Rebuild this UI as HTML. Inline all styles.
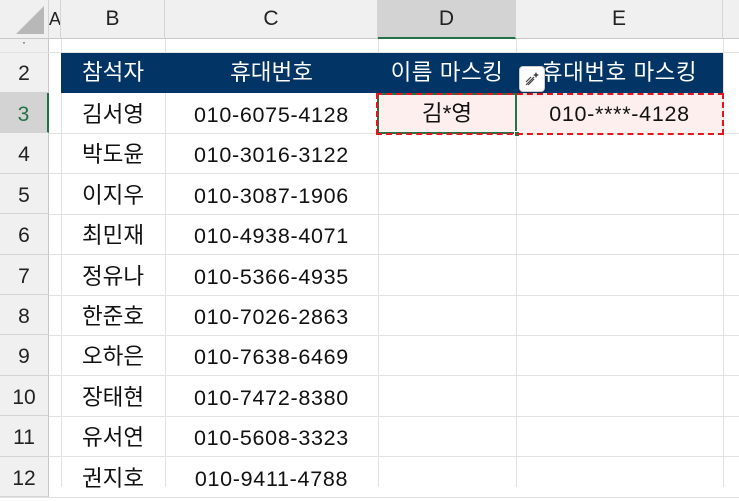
<!DOCTYPE html>
<html><head><meta charset="utf-8"><style>
*{margin:0;padding:0;box-sizing:border-box}
body{width:739px;height:487px;overflow:hidden;background:#fff;font-family:"Liberation Sans","Noto Sans CJK KR",sans-serif;position:relative}
.a{position:absolute}
.vl{position:absolute;top:0;width:1px;background:#e1e1e1;height:487px}
.hl{position:absolute;left:0;height:1px;background:#e1e1e1;width:739px}
.rh{position:absolute;left:0;width:49px;background:#f0f0f0;border-bottom:1px solid #d4d4d4;border-right:1px solid #c8c8c8;text-align:center;font-size:21px;color:#222}
.ch{position:absolute;top:0;height:39px;background:#f0f0f0;border-right:1px solid #d4d4d4;border-bottom:1px solid #c8c8c8;text-align:center;line-height:38px;font-size:21px;color:#222}
.c{position:absolute;text-align:center;font-size:22.5px;color:#111;white-space:nowrap}
.p{font-size:21.5px;letter-spacing:0.7px}
</style></head><body>
<div class="vl" style="left:61px"></div>
<div class="vl" style="left:165px"></div>
<div class="vl" style="left:378px"></div>
<div class="vl" style="left:516px"></div>
<div class="vl" style="left:723px"></div>
<div id="rows"></div>
<div class="ch" style="left:0;width:49px"><div class="a" style="left:16px;top:6px;width:0;height:0;border-left:28px solid transparent;border-bottom:28px solid #b8b8b8"></div></div>
<div class="ch" style="left:49px;width:12px;font-size:18px;overflow:hidden">A</div>
<div class="ch" style="left:61px;width:104px">B</div>
<div class="ch" style="left:165px;width:213px">C</div>
<div class="ch" style="left:378px;width:138px;background:#d3d3d3;border-bottom:2px solid #217346">D</div>
<div class="ch" style="left:516px;width:207px">E</div>
<div class="ch" style="left:723px;width:16px;border-right:none"></div>
<div class="a" style="left:61px;top:53px;width:662px;height:40px;background:#023466"></div>
<div class="c" style="left:61px;top:53px;width:104px;line-height:40px;color:#fff">참석자</div>
<div class="c" style="left:165px;top:53px;width:213px;line-height:40px;color:#fff">휴대번호</div>
<div class="c" style="left:378px;top:53px;width:138px;line-height:40px;color:#fff;letter-spacing:0.5px">이름 마스킹</div>
<div class="c" style="left:516px;top:53px;width:207px;line-height:40px;color:#fff;letter-spacing:0.5px">휴대번호 마스킹</div>
<div class="a" style="left:378px;top:93px;width:345px;height:41px;background:#fdefed"></div>
<div class="a" style="left:377px;top:93px;width:140px;height:41px;border:2px solid #217346"></div>
<div class="a" style="left:514px;top:131px;width:6px;height:6px;background:#217346;border:1px solid #fff"></div>
<div class="a" style="left:376px;top:93px;width:348px;height:42px;border:2px dashed #e8141b"></div>
<div class="c" style="left:378px;top:93px;width:138px;line-height:42px">김*영</div>
<div class="c p" style="left:516px;top:93px;width:207px;line-height:42px">010-****-4128</div>
<div class="a" style="left:519px;top:66px;width:26px;height:26px;background:#fff;border:1px solid #ccc;border-radius:4px;box-shadow:0 2px 3px rgba(0,0,0,.2)">
<svg width="24" height="24" viewBox="0 0 24 24"><path d="M6 18l8-8M8 18l6-6M6 15l5-5" stroke="#444" stroke-width="1.2"/><path d="M16 5l1 2 2 1-2 1-1 2-1-2-2-1 2-1z" fill="#444"/></svg></div>
<script>
var names=["참석자","김서영","박도윤","이지우","최민재","정유나","한준호","오하은","장태현","유서연","권지호"];
var ph=["","010-6075-4128","010-3016-3122","010-3087-1906","010-4938-4071","010-5366-4935","010-7026-2863","010-7638-6469","010-7472-8380","010-5608-3323","010-9411-4788"];
var h="";
h+='<div class="rh" style="top:39px;height:14px;line-height:6px;font-size:12px">·</div>';
h+='<div class="rh" style="top:53px;height:40px;line-height:42px">2</div>';
for(var n=3;n<=12;n++){var t=93+(n-3)*40.4;
h+='<div class="hl" style="top:'+(t+40)+'px"></div>';
var sel=n==3;
h+='<div class="rh" style="top:'+t+'px;height:40.4px;line-height:44px;'+(sel?'background:#d3d3d3;color:#217346;border-right:2px solid #217346':'')+'">'+n+'</div>';
h+='<div class="c" style="left:61px;top:'+t+'px;width:104px;line-height:44px">'+names[n-2]+'</div>';
h+='<div class="c p" style="left:165px;top:'+t+'px;width:213px;line-height:44px">'+ph[n-2]+'</div>';}
h+='<div class="hl" style="top:52px"></div>';
document.getElementById('rows').innerHTML=h;
</script>
</body></html>
